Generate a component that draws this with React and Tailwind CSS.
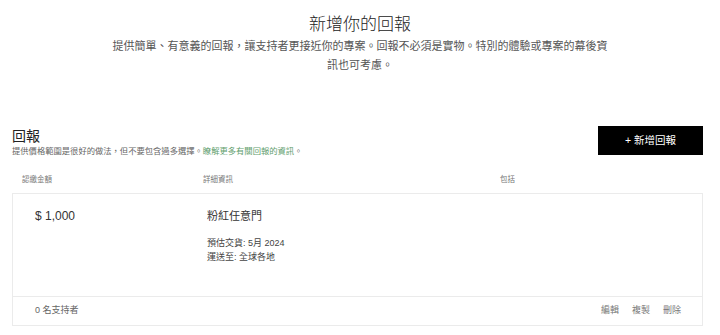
export default function App() {
  const font = { fontFamily: '"Liberation Sans", "Noto Sans CJK TC", sans-serif' };

  return (
    <div className="w-[720px] h-[335px] bg-white overflow-hidden" style={font}>
      {/* page intro */}
      <div className="flex flex-col items-center pt-[13px]">
        <h1 className="text-[17px] leading-[24px] font-light text-[#222]">新增你的回報</h1>
        <p className="w-[500px] text-center text-[11px] leading-[19px] text-[#555]">
          提供簡單、有意義的回報，讓支持者更接近你的專案。回報不必須是實物。特別的體驗或專案的幕後資訊也可考慮。
        </p>
      </div>

      <div className="pl-[12px] pr-[17px]">
        {/* section heading + add button */}
        <div className="mt-[51px] flex items-start justify-between">
          <div>
            <h2 className="text-[14px] leading-[20px] text-[#222]">回報</h2>
            <p className="text-[8.3px] leading-[10px] text-[#666]">
              提供價格範圍是很好的做法，但不要包含過多選擇。
              <span className="text-[#5f9e6e]">瞭解更多有關回報的資訊</span>。
            </p>
          </div>
          <button className="w-[105px] h-[29px] bg-black text-white text-[10.5px]">+ 新增回報</button>
        </div>

        {/* table header */}
        <div className="mt-[18px] flex pl-[10px] text-[7.5px] leading-[12px] text-[#777]">
          <div className="w-[181px]">認繳金額</div>
          <div className="w-[297px]">詳細資訊</div>
          <div>包括</div>
        </div>

        {/* reward card */}
        <div className="mt-[7px] border border-[#ebebeb]">
          <div className="flex h-[102px] pl-[22px] pt-[14px]">
            <div className="w-[172px] text-[12px] leading-[16px] text-[#333]">$ 1,000</div>
            <div>
              <div className="text-[11px] leading-[16px] text-[#333]">粉紅任意門</div>
              <div className="mt-[12px] text-[9px] leading-[14px] text-[#444]">
                <div>預估交貨: 5月 2024</div>
                <div>運送至: 全球各地</div>
              </div>
            </div>
          </div>
          <div className="flex h-[29px] items-center justify-between border-t border-[#ebebeb] pl-[22px] pr-[21px] text-[9px] text-[#666]">
            <span>0 名支持者</span>
            <div className="flex gap-[13px] text-[#777]">
              <span>編輯</span>
              <span>複製</span>
              <span>刪除</span>
            </div>
          </div>
        </div>
      </div>
    </div>
  );
}
